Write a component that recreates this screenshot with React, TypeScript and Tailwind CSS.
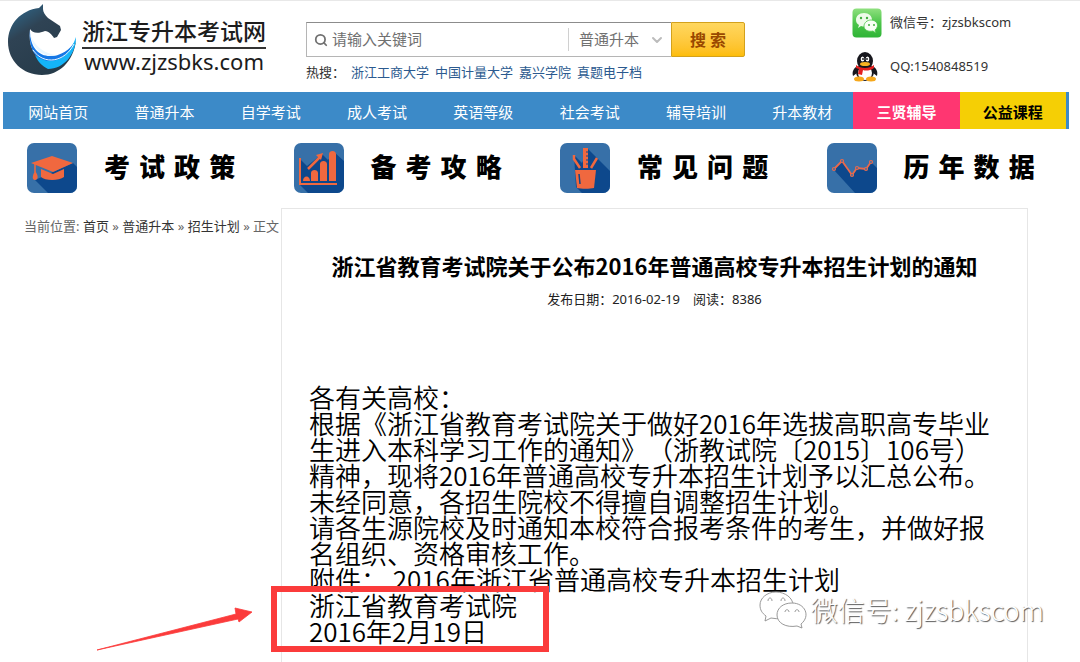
import { useState } from 'react'
import { ChevronDown, Search } from 'lucide-react'

const NAV_ITEMS = ['网站首页', '普通升本', '自学考试', '成人考试', '英语等级', '社会考试', '辅导培训', '升本教材']

const HOT_WORDS = ['浙江工商大学', '中国计量大学', '嘉兴学院', '真题电子档']

const FEATURES = [
  { label: '考 试 政 策', Icon: CapIcon },
  { label: '备 考 攻 略', Icon: BarsIcon },
  { label: '常 见 问 题', Icon: PencilsIcon },
  { label: '历 年 数 据', Icon: TrendIcon },
]

function HorseLogo() {
  return (
    <svg aria-hidden="true" className="h-[72px] w-[70px] shrink-0" viewBox="0 0 70 72">
      <defs>
        <linearGradient id="horse" x1="0" x2="0.6" y1="0" y2="1">
          <stop offset="0" stopColor="#2f6f95" />
          <stop offset="0.4" stopColor="#2f4354" />
          <stop offset="1" stopColor="#263b4a" />
        </linearGradient>
      </defs>
      <path
        d="M35 0 L31 4 C13 6 0 20 0 38 C0 57 15 71 34 71 C51 71 65 58 68 37 C62 54 50 60 38 57 C26 53 20 43 22 25 C24 29 30 30 37 27 C41 27 44 31 46 34 L49 33 L53 26 L52 22 L40 14 C37 11 35 8 35 5 Z"
        fill="url(#horse)"
      />
      <path d="M22 26 C22 44 31 52 42 52 C53 52 62 46 68 36 C64 49 55 59 43 59 C29 58 20 46 22 26 Z" fill="#1577e6" />
      <path d="M27 51 C43 64 61 55 68 33 C68 50 56 65 40 65 C34 62 30 58 27 51 Z" fill="#14b4f8" />
      <path d="M22 30 C25 48 38 54 50 51 C42 51 28 46 22 30 Z" fill="#e9f7ff" />
      <path d="M25 46 C36 62 57 58 66 40" fill="none" stroke="#e9f7ff" strokeWidth="1" />
    </svg>
  )
}

function WechatIcon() {
  return (
    <svg aria-hidden="true" className="size-[30px]" viewBox="0 0 30 30">
      <defs>
        <linearGradient id="wechat" x1="0" x2="0" y1="0" y2="1">
          <stop offset="0" stopColor="#8fe07f" />
          <stop offset="0.5" stopColor="#4cc54a" />
          <stop offset="1" stopColor="#2fb437" />
        </linearGradient>
      </defs>
      <rect fill="url(#wechat)" height="29" rx="4" width="29" x="0.5" y="0.5" />
      <path d="M12 5 C7 5 4 8 4 12 C4 14 5 16 7 17 L6 20 L9 18 C16 20 20 16 20 12 C20 8 17 5 12 5 Z" fill="#eefbe9" />
      <path
        d="M19 12 C15 12 12 15 12 18 C12 22 16 24 21 23 L24 25 L23 22 C28 18 25 12 19 12 Z"
        fill="#f7fff4"
        stroke="#4cc54a"
        strokeWidth="0.8"
      />
      <g fill="#3fae3d">
        <circle cx="9" cy="10" r="1.2" />
        <circle cx="15" cy="10" r="1.2" />
        <circle cx="17" cy="17" r="1" />
        <circle cx="22" cy="17" r="1" />
      </g>
    </svg>
  )
}

function PenguinIcon() {
  return (
    <svg aria-hidden="true" className="h-[30px] w-[26px]" viewBox="0 0 26 30">
      <path d="M5 14 C1 17 0 20 1 24 L5 21 Z M21 14 C25 17 26 20 25 24 L21 21 Z" fill="#17171d" />
      <ellipse cx="13" cy="20" fill="#17171d" rx="9" ry="9" />
      <ellipse cx="13" cy="21" fill="#fff" rx="7" ry="7" />
      <ellipse cx="13" cy="9" fill="#17171d" rx="8" ry="9" />
      <ellipse cx="7" cy="27" fill="#f6a81c" rx="5" ry="2.5" />
      <ellipse cx="19" cy="27" fill="#f6a81c" rx="5" ry="2.5" />
      <ellipse cx="10.5" cy="7" fill="#fff" rx="1.8" ry="2.6" />
      <ellipse cx="15.5" cy="7" fill="#fff" rx="1.8" ry="2.6" />
      <circle cx="11" cy="7" fill="#111" r="0.9" />
      <circle cx="15" cy="7" fill="#111" r="0.9" />
      <ellipse cx="13" cy="12" fill="#f8b321" rx="5" ry="2" />
      <path d="M4 13 C9 17 17 17 22 13 L22 16 C18 19 13 19 11 18 L10 23 L6 22 L7 17 L4 16 Z" fill="#e3201f" />
    </svg>
  )
}

function CapIcon() {
  return (
    <svg aria-hidden="true" className="size-[50px] shrink-0" viewBox="0 0 50 50">
      <rect fill="#3770a8" height="50" rx="7" width="50" />
      <path d="M46 20 L50 24 V43 A7 7 0 0 1 43 50 H21 L8 37 Z" fill="#0d488c" />
      <path d="M4 20 L25 13 L46 20 L26 29 Z" fill="#f0683f" />
      <path d="M14 26 L26 31 L37 26 V34 C32 38 18 38 14 34 Z" fill="#f0683f" />
      <path d="M8 21 V29" stroke="#f0683f" strokeWidth="1.5" />
      <path d="M8 28 C12 33 11 37 8 37 C5 37 5 33 8 28 Z" fill="#f0683f" />
    </svg>
  )
}

function BarsIcon() {
  return (
    <svg aria-hidden="true" className="size-[50px] shrink-0" viewBox="0 0 50 50">
      <rect fill="#3770a8" height="50" rx="7" width="50" />
      <path d="M6 16 L13 23 L28 11 L34 17 L40 9 L50 18 V43 A7 7 0 0 1 43 50 H14 L6 42 Z" fill="#0d488c" />
      <path d="M6 15 V41 H43" fill="none" stroke="#f0683f" strokeWidth="2" />
      <path
        d="M9 38 C9 32 16 32 16 38 Z M17 38 V30 C17 26 24 26 24 30 V38 Z M26 38 V21 C26 17 33 17 33 21 V38 Z M35 38 V11 C35 7 42 7 42 11 V38 Z"
        fill="#f0683f"
      />
      <path d="M14 26 L26 14" stroke="#f0683f" strokeWidth="2.5" />
      <path d="M22 12 L29 10 L27 17 Z" fill="#f0683f" />
    </svg>
  )
}

function PencilsIcon() {
  return (
    <svg aria-hidden="true" className="size-[50px] shrink-0" viewBox="0 0 50 50">
      <rect fill="#3770a8" height="50" rx="7" width="50" />
      <path d="M14 12 L22 20 L28 6 L50 28 V43 A7 7 0 0 1 43 50 H22 L16 44 Z" fill="#0d488c" />
      <path d="M15 27 H36 L34 45 C30 46 21 46 17 45 Z" fill="#f0683f" />
      <path d="M23 5 H28 V25 H23 Z" fill="#f0683f" />
      <path d="M26 9 H28 M26 13 H28 M26 17 H28 M26 21 H28" stroke="#0d488c" />
      <path d="M14 12 V16 L20 25 M37 15 L31 25" fill="none" stroke="#f0683f" strokeWidth="2.5" />
      <path d="M19 31 L20 41" stroke="#0d488c" strokeWidth="1.5" />
    </svg>
  )
}

function TrendIcon() {
  return (
    <svg aria-hidden="true" className="size-[50px] shrink-0" viewBox="0 0 50 50">
      <rect fill="#3770a8" height="50" rx="7" width="50" />
      <path d="M7 27 L15 18 L25 31 L30 26 L38 26 L44 19 L50 25 V43 A7 7 0 0 1 43 50 H28 Z" fill="#0d488c" />
      <path d="M7 26 L15 18 L25 32 L30 25 L39 26 L44 19" fill="none" stroke="#e9694c" strokeWidth="1.8" />
      <g fill="#3770a8" stroke="#e9694c" strokeWidth="1.2">
        <circle cx="7" cy="26" r="1.5" />
        <circle cx="15" cy="18" r="1.5" />
        <circle cx="25" cy="32" r="1.5" />
        <circle cx="30" cy="25" r="1.5" />
        <circle cx="39" cy="26" r="1.5" />
        <circle cx="44" cy="19" r="1.5" />
      </g>
    </svg>
  )
}

function SearchForm() {
  const [keyword, setKeyword] = useState('')
  const [category, setCategory] = useState('普通升本')

  return (
    <div className="w-[439px] shrink-0 pt-[21px]">
      <form className="flex h-[35px]" onSubmit={event => event.preventDefault()}>
        <div className="flex flex-1 items-center border border-r-0 border-[#b5b5b5] border-t-[#8c8c8c] pl-[7px] text-[15px] text-[#707070]">
          <Search aria-hidden="true" className="size-[14px] shrink-0 text-[#707070]" strokeWidth={3} />
          <input
            aria-label="关键词"
            className="w-0 flex-1 px-1 outline-none placeholder:text-[#707070]"
            onChange={event => setKeyword(event.target.value)}
            placeholder="请输入关键词"
            type="text"
            value={keyword}
          />
          <div className="relative border-l border-[#d0d0d0]">
            <select
              aria-label="考试类别"
              className="h-5 w-[102px] appearance-none pl-[10px] leading-5 outline-none"
              onChange={event => setCategory(event.target.value)}
              value={category}
            >
              <option>普通升本</option>
              <option>自学考试</option>
              <option>成人考试</option>
            </select>
            <ChevronDown
              aria-hidden="true"
              className="pointer-events-none absolute top-1 right-[6px] size-4 text-[#bcbcbc]"
              strokeWidth={3}
            />
          </div>
        </div>
        <button
          className="w-[74px] rounded-r-xs border border-[#d3a11c] bg-linear-to-b from-[#ffd75e] to-[#fdbd06] text-base font-bold text-[#994800]"
          type="submit"
        >
          搜 索
        </button>
      </form>
      <p className="mt-[5px] flex gap-[6px] text-[13px] leading-5 whitespace-nowrap text-[#333]">
        <span>热搜：</span>
        {HOT_WORDS.map(word => (
          <a key={word} className="text-[#2b5a8f]" href="#hot">
            {word}
          </a>
        ))}
      </p>
    </div>
  )
}

function Header() {
  return (
    <header className="flex h-[92px] border-t border-[#e8e8e8] pl-2">
      <a className="flex w-[298px] shrink-0 items-start gap-1 pt-[3px]" href="#home">
        <HorseLogo />
        <span className="mt-[13px] text-center text-[#1c1c1c]">
          <span className="block border-b-2 border-[#333] pb-[2px] text-[23px] leading-7 font-medium">浙江专升本考试网</span>
          <span className="block font-['Noto_Sans','Open_Sans',sans-serif] text-[22px] leading-6">www.zjzsbks.com</span>
        </span>
      </a>
      <SearchForm />
      <ul className="ml-auto w-[228px] shrink-0 pt-[7px] text-[13px] text-[#333]">
        <li className="flex h-[30px] items-center gap-2">
          <WechatIcon />
          微信号：zjzsbkscom
        </li>
        <li className="mt-[14px] flex h-[30px] items-center gap-3">
          <PenguinIcon />
          QQ:1540848519
        </li>
      </ul>
    </header>
  )
}

function NavBar() {
  return (
    <nav className="mr-[11px] ml-[3px] grid h-[37px] grid-cols-10 bg-[#3c8ac8] pr-[3px] text-center text-[15px] leading-10 text-white">
      {NAV_ITEMS.map(item => (
        <a key={item} className="h-full pl-1" href="#nav">
          {item}
        </a>
      ))}
      <a className="h-[37px] bg-[#ff3671] font-bold" href="#sanxian">
        三贤辅导
      </a>
      <a className="h-[37px] bg-[#f5cf05] font-bold text-black" href="#gongyi">
        公益课程
      </a>
    </nav>
  )
}

function WatermarkBubbles() {
  return (
    <svg aria-hidden="true" className="h-10 w-12" viewBox="0 0 48 40">
      <g fill="#fff" stroke="#8d8d8d" strokeWidth="0.9">
        <path d="M17 2 C8 2 1 8 1 15 C1 20 3 23 7 26 L6 31 L12 28 C27 31 34 24 34 15 C34 8 26 2 17 2 Z" />
        <path d="M33 13 C24 13 18 18 18 25 C18 33 27 38 38 36 L43 38 L42 34 C52 26 46 13 33 13 Z" />
        <path d="M9 11 C9 7 13 7 13 11 M22 11 C22 7 26 7 26 11 M26 22 C26 19 30 19 30 22 M36 22 C36 19 40 19 40 22" fill="none" />
      </g>
    </svg>
  )
}

function Article() {
  return (
    <article className="mr-[52px] flex-1 border border-b-0 border-[#e6e6e6] px-[27px] text-black">
      <h1 className="mt-10 text-center font-['Noto_Sans_CJK_SC',sans-serif] text-[22px] leading-8 font-bold whitespace-nowrap">
        浙江省教育考试院关于公布2016年普通高校专升本招生计划的通知
      </h1>
      <p className="mt-2 text-center text-[13px] leading-5 text-[#222]">发布日期：2016-02-19　阅读：8386</p>
      <div className="mt-[75px] font-['Noto_Sans_CJK_SC',sans-serif] text-[26px] leading-[26px] font-[350] whitespace-nowrap [text-spacing-trim:space-all]">
        <p>各有关高校：</p>
        <p>
          根据《浙江省教育考试院关于做好2016年选拔高职高专毕业
          <br />
          生进入本科学习工作的通知》（浙教试院〔2015〕106号）
          <br />
          精神，现将2016年普通高校专升本招生计划予以汇总公布。
          <br />
          未经同意，各招生院校不得擅自调整招生计划。
        </p>
        <p>
          请各生源院校及时通知本校符合报考条件的考生，并做好报
          <br />
          名组织、资格审核工作。
        </p>
        <p>附件： 2016年浙江省普通高校专升本招生计划</p>
        <div className="relative">
          <p>浙江省教育考试院</p>
          <p>2016年2月19日</p>
          <div className="absolute top-[-6px] left-[-38px] h-[66px] w-[278px] border-6 border-[#fb3b3b]" />
          <svg aria-hidden="true" className="absolute top-[15px] left-[-213px] h-[44px] w-[158px]" viewBox="0 0 158 44">
            <path d="M1 43 L140 7 L139 1 L156 5 L143 15 L142 12 Z" fill="#fb3b3b" stroke="#fb3b3b" strokeWidth="0.8" />
          </svg>
        </div>
      </div>
    </article>
  )
}

export default function App() {
  return (
    <div className="relative flex min-h-screen flex-col bg-white font-['Noto_Sans','Noto_Sans_CJK_SC',sans-serif]">
      <Header />
      <NavBar />
      <section className="mt-[14px] mr-[11px] ml-[3px] grid grid-cols-4">
        {FEATURES.map(({ label, Icon }) => (
          <a
            key={label}
            className="flex items-center gap-[27px] pl-6 font-['DejaVu_Sans','Noto_Sans_CJK_SC',sans-serif] text-[26px] leading-[50px] font-black whitespace-nowrap text-black"
            href="#feature"
          >
            <Icon />
            {label}
          </a>
        ))}
      </section>
      <main className="mt-[15px] flex flex-1">
        <div className="w-[281px] shrink-0 pt-2 pl-6 text-[13px] leading-5 whitespace-nowrap text-[#666]">
          当前位置:{' '}
          <a className="text-[#333]" href="#home">
            首页
          </a>{' '}
          »{' '}
          <a className="text-[#333]" href="#benke">
            普通升本
          </a>{' '}
          »{' '}
          <a className="text-[#333]" href="#plan">
            招生计划
          </a>{' '}
          » 正文
        </div>
        <Article />
      </main>
      <div className="absolute right-9 bottom-8 flex items-center gap-1 font-['Noto_Sans_CJK_SC',sans-serif] text-[27px] leading-10 font-light text-white [text-shadow:1px_1px_1px_#555]">
        <WatermarkBubbles />
        微信号: zjzsbkscom
      </div>
    </div>
  )
}
